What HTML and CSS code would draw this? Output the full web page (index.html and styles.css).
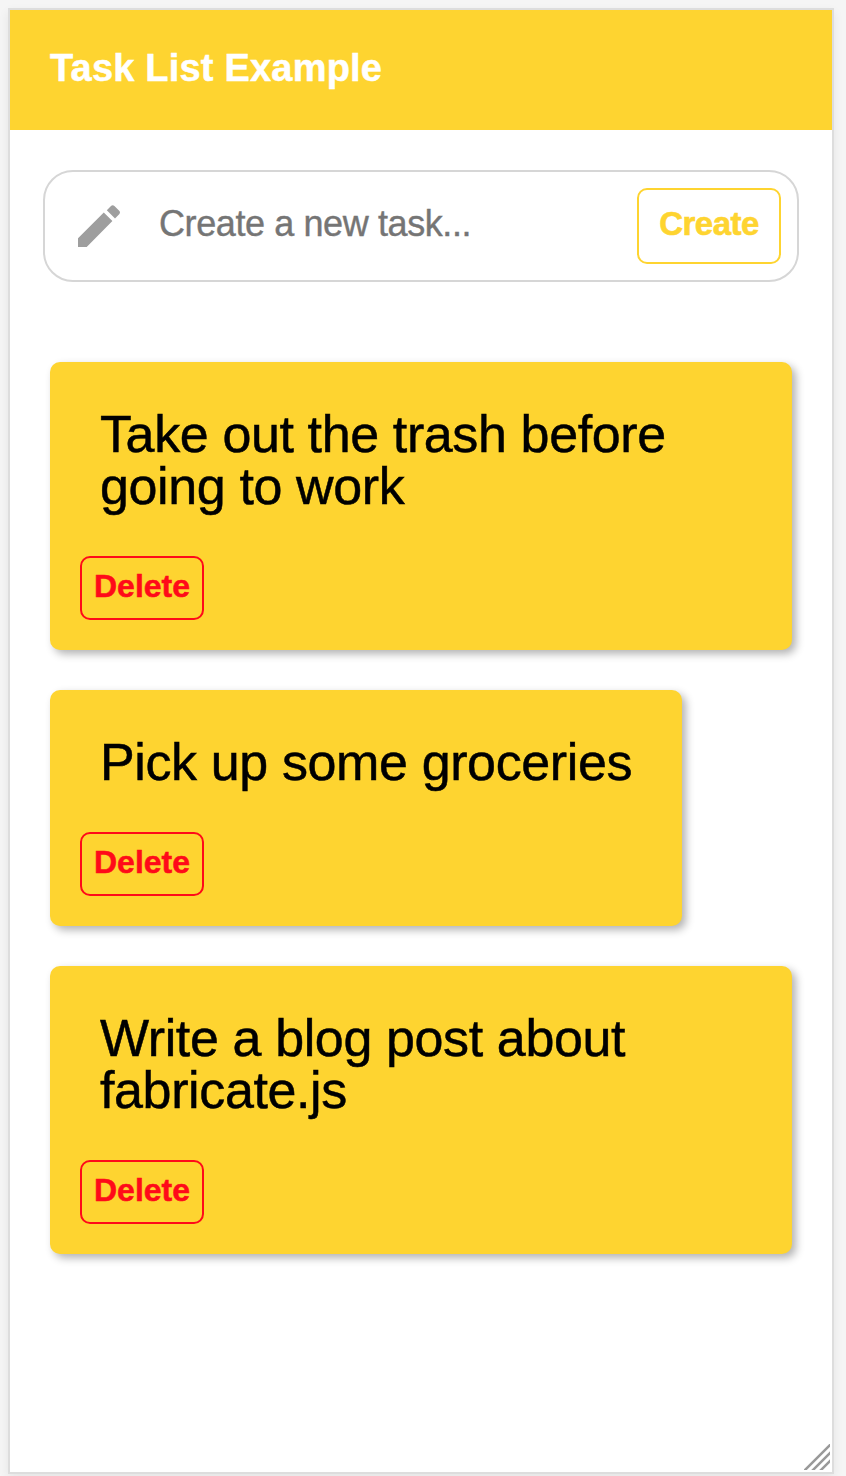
FILE: index.html
```html
<!DOCTYPE html>
<html lang="en">
<head>
<meta charset="utf-8">
<title>Task List Example</title>
<link rel="stylesheet" href="styles.css">
</head>
<body>
<main class="app">
  <header class="header"><h1 class="title">Task List Example</h1></header>
  <form class="create">
    <svg class="pencil" viewBox="0 0 42 42"><path d="M0 33.300 25.800 7.500 34.400 16.100 8.700 42H0zM28.800 5.200l4.200-4.200a2.500 2.500 0 0 1 3.400 0l4.800 4.800a2.500 2.500 0 0 1 0 3.400l-4.200 4.200z"/></svg>
    <span class="placeholder">Create a new task...</span>
    <button class="create-button" type="button">Create</button>
  </form>
  <section class="tasks">
    <article class="task">
      <p class="task-text">Take out the trash before going to work</p>
      <button class="delete" type="button">Delete</button>
    </article>
    <article class="task task-short">
      <p class="task-text">Pick up some groceries</p>
      <button class="delete" type="button">Delete</button>
    </article>
    <article class="task">
      <p class="task-text">Write a blog post about fabricate.js</p>
      <button class="delete" type="button">Delete</button>
    </article>
  </section>
  <svg class="resize" viewBox="0 0 26 26"><path d="M0 27 27 0M8 27 27 8M16 27 27 16"/></svg>
</main>
</body>
</html>
```
FILE: styles.css
```css
* { box-sizing: border-box; }
body { margin: 0; padding: 8px 12px 2px 8px; height: 1476px; background: #f5f5f5; font-family: "Liberation Sans", Arial, sans-serif; overflow: hidden; }
.app { position: relative; width: 826px; height: 1466px; border: 2px solid #ddd; background: #fff; box-shadow: 0 4px 10px rgba(0, 0, 0, .07); }
.header { height: 120px; padding: 36px 40px; background: #fed430; }
.title { margin: 0; font-size: 38px; line-height: 44px; letter-spacing: .2px; color: #fff; white-space: nowrap; -webkit-text-stroke: .5px #fff; }
.create { display: flex; align-items: flex-start; width: 756px; height: 112px; margin: 40px 0 0 33px; padding: 16px 16px 0 33px; border: 2px solid #d6d6d6; border-radius: 30px; }
.pencil { width: 42px; height: 42px; margin-top: 17px; fill: #9e9e9e; }
.placeholder { flex: 1; margin: 16px 0 0 39px; font-size: 36px; line-height: 40px; letter-spacing: -.4px; color: #757575; white-space: nowrap; -webkit-text-stroke: .4px #757575; }
.create-button { width: 144px; height: 76px; padding: 0 0 4px; border: 2px solid #fed430; border-radius: 10px; background: #fff; color: #fed430; font: bold 33px "Liberation Sans", Arial, sans-serif; letter-spacing: -.5px; -webkit-text-stroke: .6px #fed430; }
.tasks { display: flex; flex-direction: column; gap: 40px; padding: 80px 40px 0; }
.task { width: 742px; padding: 46px 30px 30px; border-radius: 10px; background: #fed430; box-shadow: 4px 4px 8px rgba(0, 0, 0, .3); }
.task-short { width: 632px; }
.task-text { max-width: 600px; margin: 0 0 44px 20px; font-size: 52px; line-height: 52px; letter-spacing: -.38px; color: #000; -webkit-text-stroke: .5px #000; }
.delete { display: block; width: 124px; height: 64px; padding: 0 0 4px; border: 2px solid #ff0a19; border-radius: 10px; background: transparent; color: #ff0a19; font: bold 32px "Liberation Sans", Arial, sans-serif; -webkit-text-stroke: .5px #ff0a19; }
.resize { position: absolute; right: 2px; bottom: 2px; width: 26px; height: 26px; fill: none; stroke: #999; stroke-width: 2.5; }
```
